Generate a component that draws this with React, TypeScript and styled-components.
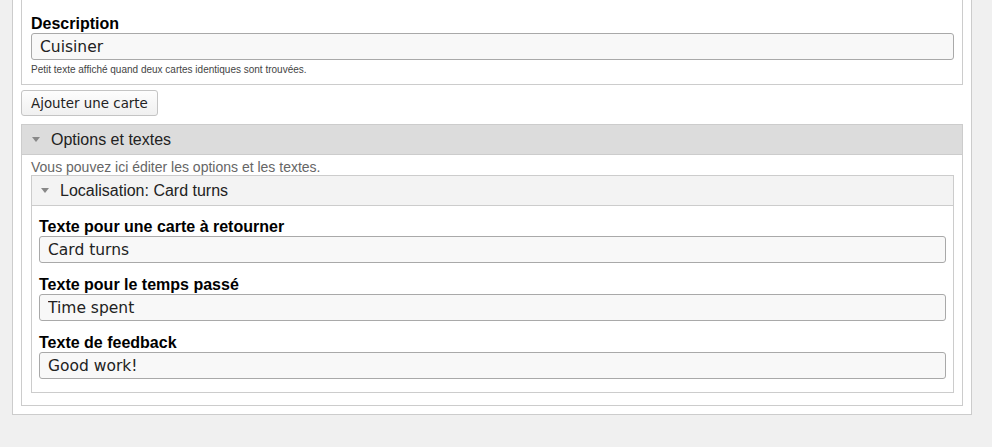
import { ReactNode } from 'react';
import styled, { createGlobalStyle } from 'styled-components';

const GlobalStyle = createGlobalStyle`
  html, body {
    margin: 0;
    padding: 0;
    background: #f0f0f0;
    overflow: hidden;
  }
  body {
    font-family: 'Liberation Sans', Arial, sans-serif;
    color: #222;
  }
`;

const Page = styled.div`
  margin: 0 20px 0 12px;
`;

// the editor is scrolled a little, so its top edge sits above the window
const Editor = styled.div`
  margin-top: -10px;
  background: #fff;
  border: 1px solid #ccc;
  padding: 8px 8px 8px 8px;
`;

const Card = styled.div`
  border: 1px solid #ccc;
  padding: 12px 8px 8px 9px;
`;

const Field = styled.div`
  & + & {
    margin-top: 10px;
  }
`;

const Label = styled.label`
  display: block;
  font-weight: bold;
  font-size: 16px;
  line-height: 18px;
  color: #000;
  padding-top: 3px;
`;

const Input = styled.input`
  display: block;
  box-sizing: border-box;
  width: 100%;
  height: 27px;
  margin: 0;
  padding: 0 8px;
  border: 1px solid #a9a9a9;
  border-radius: 3px;
  background: #f8f8f8;
  font-family: 'DejaVu Sans', Verdana, sans-serif;
  font-size: 15.5px;
  color: #222;
  outline: none;
`;

const Help = styled.div`
  margin-top: 4px;
  font-size: 10px;
  line-height: 12px;
  color: #444;
`;

const Button = styled.button`
  display: block;
  margin-top: 5px;
  height: 26px;
  padding: 0 9px;
  border: 1px solid #c4c4c4;
  border-radius: 3px;
  background: linear-gradient(#fdfdfd, #f0f0f0);
  font-family: 'DejaVu Sans', Verdana, sans-serif;
  font-size: 13.4px;
  color: #222;
`;

const Group = styled.div<{ $nested?: boolean }>`
  border: 1px solid #ccc;
  margin-top: ${p => (p.$nested ? 0 : 8)}px;
`;

const GroupHead = styled.div<{ $nested?: boolean }>`
  display: flex;
  align-items: center;
  height: 29px;
  padding-left: ${p => (p.$nested ? 9 : 10)}px;
  background: ${p => (p.$nested ? '#f3f3f3' : '#dcdcdc')};
  border-bottom: 1px solid #ccc;
  font-size: 16px;
  color: #222;
`;

const Arrow = styled.span`
  width: 0;
  height: 0;
  border-left: 4.5px solid transparent;
  border-right: 4.5px solid transparent;
  border-top: 5px solid #888;
  margin-right: 11px;
`;

const GroupBody = styled.div<{ $nested?: boolean }>`
  padding: ${p => (p.$nested ? '9px 7px 13px 7px' : '0 8px 12px 9px')};
`;

const Intro = styled.div`
  padding-top: 5px;
  font-size: 14px;
  line-height: 15px;
  color: #666;
`;

function Collapsible(props: { title: string; nested?: boolean; children: ReactNode }) {
  const { title, nested, children } = props;
  return (
    <Group $nested={nested}>
      <GroupHead $nested={nested}>
        <Arrow />
        {title}
      </GroupHead>
      <GroupBody $nested={nested}>{children}</GroupBody>
    </Group>
  );
}

const texts = [
  { label: 'Texte pour une carte à retourner', value: 'Card turns' },
  { label: 'Texte pour le temps passé', value: 'Time spent' },
  { label: 'Texte de feedback', value: 'Good work!' },
];

export default function App() {
  return (
    <Page>
      <GlobalStyle />
      <Editor>
        <Card>
          <Field>
            <Label>Description</Label>
            <Input defaultValue='Cuisiner' />
            <Help>Petit texte affiché quand deux cartes identiques sont trouvées.</Help>
          </Field>
        </Card>
        <Button>Ajouter une carte</Button>
        <Collapsible title='Options et textes'>
          <Intro>Vous pouvez ici éditer les options et les textes.</Intro>
          <Collapsible title='Localisation: Card turns' nested>
            {texts.map(t => (
              <Field key={t.label}>
                <Label>{t.label}</Label>
                <Input defaultValue={t.value} />
              </Field>
            ))}
          </Collapsible>
        </Collapsible>
      </Editor>
    </Page>
  );
}
